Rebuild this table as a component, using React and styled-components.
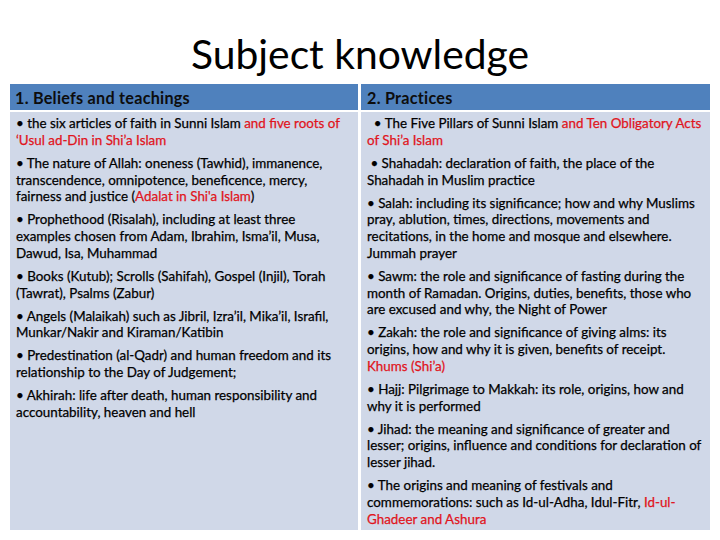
import React from 'react';
import styled, { createGlobalStyle } from 'styled-components';

const GlobalStyle = createGlobalStyle`
  html, body {
    margin: 0;
    padding: 0;
    background: #ffffff;
  }
  body {
    font-family: Lato, "Open Sans", sans-serif;
    color: #000;
  }
`;

const Slide = styled.div`
  width: 720px;
  height: 540px;
  box-sizing: border-box;
  padding: 30px 10px 0 10px;
  overflow: hidden;
`;

const Title = styled.h1`
  margin: 0 0 6px 0;
  height: 48px;
  line-height: 48px;
  text-align: center;
  font-family: Lato, sans-serif;
  font-weight: 400;
  font-size: 40.8px;
  color: #000;
`;

const Table = styled.div`
  display: grid;
  grid-template-columns: 348px 349px;
  grid-template-rows: 26px 418px;
  column-gap: 3px;
  row-gap: 2px;
`;

const HeadCell = styled.div`
  background: #4f81bd;
  display: flex;
  align-items: center;
  padding-left: ${p => p.$indent}px;
  font-weight: 700;
  font-size: 16.2px;
  letter-spacing: 0.25px;
  color: #0d0d0d;
`;

const BodyCell = styled.div`
  background: #d0d8e8;
  padding: 3px 0 0 ${p => p.$indent}px;
  box-sizing: border-box;
  white-space: nowrap;
`;

const Item = styled.p`
  margin: 0 0 6.25px 0;
  font-size: 13.4px;
  line-height: 16.75px;
  -webkit-text-stroke: 0.25px #000;
`;

const Red = styled.span`
  color: #e0141c;
  -webkit-text-stroke: 0.25px #e0141c;
`;

export default function App() {
  return (
    <>
      <GlobalStyle />
      <Slide>
        <Title>Subject knowledge</Title>
        <Table>
          <HeadCell $indent={5}>1. Beliefs and teachings</HeadCell>
          <HeadCell $indent={6}>2. Practices</HeadCell>

          <BodyCell $indent={6}>
            <Item>
              • the six articles of faith in Sunni Islam <Red>and five roots of<br />‘Usul ad-Din in Shi’a Islam</Red>
            </Item>
            <Item>
              • The nature of Allah: oneness (Tawhid), immanence,<br />
              transcendence, omnipotence, beneficence, mercy,<br />
              fairness and justice (<Red>Adalat in Shi'a Islam</Red>)
            </Item>
            <Item>
              • Prophethood (Risalah), including at least three<br />
              examples chosen from Adam, Ibrahim, Isma’il, Musa,<br />
              Dawud, Isa, Muhammad
            </Item>
            <Item>
              • Books (Kutub); Scrolls (Sahifah), Gospel (Injil), Torah<br />
              (Tawrat), Psalms (Zabur)
            </Item>
            <Item>
              • Angels (Malaikah) such as Jibril, Izra’il, Mika’il, Israfil,<br />
              Munkar/Nakir and Kiraman/Katibin
            </Item>
            <Item>
              • Predestination (al-Qadr) and human freedom and its<br />
              relationship to the Day of Judgement;
            </Item>
            <Item>
              • Akhirah: life after death, human responsibility and<br />
              accountability, heaven and hell
            </Item>
          </BodyCell>

          <BodyCell $indent={6}>
            <Item>
              &nbsp;&nbsp;• The Five Pillars of Sunni Islam <Red>and Ten Obligatory Acts<br />of Shi’a Islam</Red>
            </Item>
            <Item>
              &nbsp;• Shahadah: declaration of faith, the place of the<br />
              Shahadah in Muslim practice
            </Item>
            <Item>
              • Salah: including its significance; how and why Muslims<br />
              pray, ablution, times, directions, movements and<br />
              recitations, in the home and mosque and elsewhere.<br />
              Jummah prayer
            </Item>
            <Item>
              • Sawm: the role and significance of fasting during the<br />
              month of Ramadan. Origins, duties, benefits, those who<br />
              are excused and why, the Night of Power
            </Item>
            <Item>
              • Zakah: the role and significance of giving alms: its<br />
              origins, how and why it is given, benefits of receipt.<br />
              <Red>Khums (Shi’a)</Red>
            </Item>
            <Item>
              • Hajj: Pilgrimage to Makkah: its role, origins, how and<br />
              why it is performed
            </Item>
            <Item>
              • Jihad: the meaning and significance of greater and<br />
              lesser; origins, influence and conditions for declaration of<br />
              lesser jihad.
            </Item>
            <Item>
              • The origins and meaning of festivals and<br />
              commemorations: such as Id-ul-Adha, Idul-Fitr, <Red>Id-ul-<br />Ghadeer and Ashura</Red>
            </Item>
          </BodyCell>
        </Table>
      </Slide>
    </>
  );
}
